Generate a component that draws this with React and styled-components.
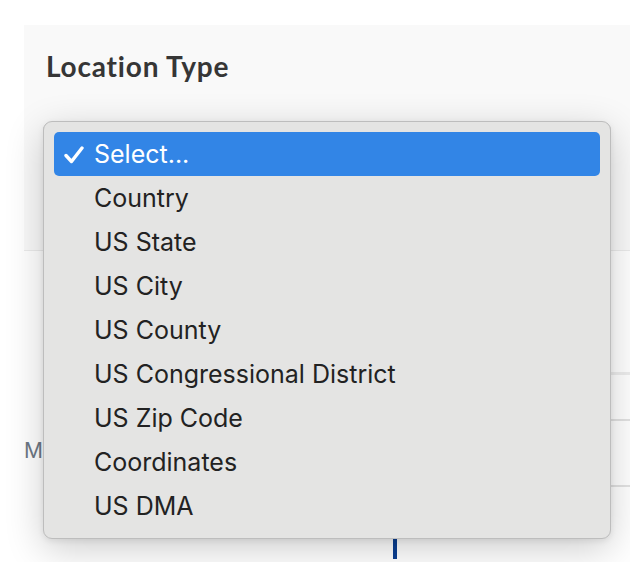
import styled, { createGlobalStyle } from "styled-components";

const GlobalStyle = createGlobalStyle`
  html, body {
    margin: 0;
    background: #ffffff;
    font-family: Inter, "Liberation Sans", sans-serif;
  }
`;

const StyledPage = styled.div`
  position: relative;
  width: 630px;
  height: 562px;
  overflow: hidden;
  padding: 25px 0 0 24px;
  box-sizing: border-box;
`;

const StyledPanel = styled.section`
  height: 226px;
  box-sizing: border-box;
  background: #f9f9f9;
  border-bottom: 1px solid #ebebeb;
  padding: 24px 0 0 22px;
`;

const StyledHeading = styled.h2`
  margin: 0;
  font-family: Lato, "Noto Sans", sans-serif;
  font-weight: 700;
  font-size: 28px;
  line-height: normal;
  letter-spacing: 0.8px;
  color: #363636;
`;

const StyledSelectBox = styled.div`
  margin: 39px 0 0 -3px;
  width: 568px;
  height: 102px;
  box-sizing: border-box;
  border: 1px solid #c8c8c8;
  border-radius: 8px;
  background: #ffffff;
`;

const StyledTable = styled.div`
  display: grid;
  grid-template-columns: 200px 1fr;
  grid-template-rows: 124px 46px 66px;
`;

const StyledCell = styled.div`
  display: flex;
  align-items: center;
  border-bottom: ${(props) => (props.$line ? `${props.$line}px solid ${props.$color}` : "none")};
`;

const StyledLabel = styled.span`
  font-family: Inter, "Liberation Sans", sans-serif;
  font-size: 21px;
  color: #6d7885;
  margin-top: -8px;
`;

const StyledFooter = styled.div`
  display: flex;
  padding: 52px 0 0 369px;
`;

const StyledCursor = styled.div`
  width: 4px;
  height: 20px;
  background: #0b3f92;
`;

const StyledMenu = styled.ul`
  position: absolute;
  left: 43px;
  top: 121px;
  width: 568px;
  margin: 0;
  padding: 10px 10px;
  box-sizing: border-box;
  list-style: none;
  background: #e4e4e3;
  border: 1px solid #bdbdbd;
  border-radius: 9px;
  box-shadow: 0 10px 38px rgba(0, 0, 0, 0.2), 0 2px 6px rgba(0, 0, 0, 0.08);
`;

const StyledOption = styled.li`
  position: relative;
  height: 44px;
  display: flex;
  align-items: center;
  padding-left: 40px;
  border-radius: 5px;
  font-size: 25px;
  color: ${(props) => (props.$selected ? "#ffffff" : "#222222")};
  background: ${(props) => (props.$selected ? "#3285e6" : "transparent")};
`;

const StyledCheck = styled.svg`
  position: absolute;
  left: 10px;
  top: 14px;
`;

const options = [
  "Select...",
  "Country",
  "US State",
  "US City",
  "US County",
  "US Congressional District",
  "US Zip Code",
  "Coordinates",
  "US DMA",
];

const App = () => {
  return (
    <StyledPage>
      <GlobalStyle />
      <StyledPanel>
        <StyledHeading>Location Type</StyledHeading>
        <StyledSelectBox />
      </StyledPanel>

      <StyledTable>
        <StyledCell />
        <StyledCell $line={3} $color="#ededed" />
        <StyledCell />
        <StyledCell $line={2} $color="#e2e2e2" />
        <StyledCell>
          <StyledLabel>Metric</StyledLabel>
        </StyledCell>
        <StyledCell $line={2} $color="#e2e2e2" />
      </StyledTable>

      <StyledFooter>
        <StyledCursor />
      </StyledFooter>

      <StyledMenu>
        {options.map((option, i) => (
          <StyledOption key={option} $selected={i === 0}>
            {i === 0 && (
              <StyledCheck width="20" height="18" viewBox="0 0 20 18">
                <polyline
                  points="2,9.5 7.5,15.5 18,2"
                  fill="none"
                  stroke="#ffffff"
                  strokeWidth="3.4"
                  strokeLinecap="round"
                  strokeLinejoin="round"
                />
              </StyledCheck>
            )}
            {option}
          </StyledOption>
        ))}
      </StyledMenu>
    </StyledPage>
  );
};

export default App;
